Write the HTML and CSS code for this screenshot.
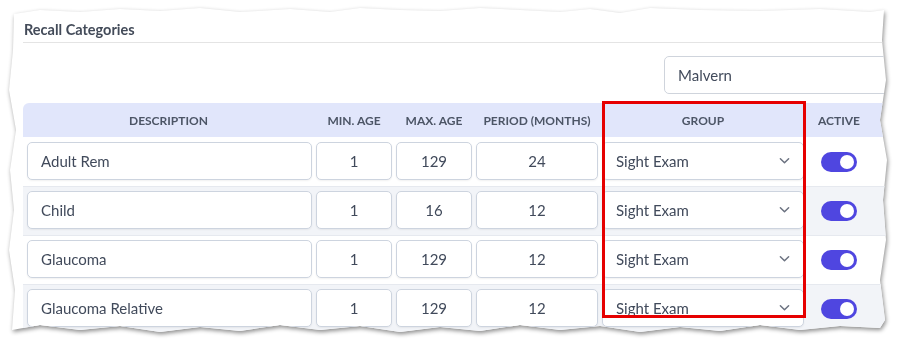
FILE: index.html
```html
<!DOCTYPE html>
<html lang="en">
<head>
    <meta charset="UTF-8">
    <title>Recall Categories</title>
    <link rel="stylesheet" href="styles.css">
</head>
<body>
    <div class="paper">
        <div class="sheet">
            <h2 class="title">Recall Categories</h2>

            <div class="filter-row">
                <div class="branch-input">Malvern</div>
            </div>

            <table class="recall-table">
                <thead>
                    <tr>
                        <th class="col-desc">Description</th>
                        <th class="col-age">Min. Age</th>
                        <th class="col-age">Max. Age</th>
                        <th class="col-period">Period (Months)</th>
                        <th class="col-group">Group</th>
                        <th class="col-active">Active</th>
                        <th class="col-rest"></th>
                    </tr>
                </thead>
                <tbody>
                    <tr>
                        <td><div class="field">Adult Rem</div></td>
                        <td><div class="field num">1</div></td>
                        <td><div class="field num">129</div></td>
                        <td><div class="field num">24</div></td>
                        <td><div class="field select">Sight Exam <svg class="chev" viewBox="0 0 12 8"><path d="M1.5 1.5 6 6l4.5-4.5"/></svg></div></td>
                        <td><span class="toggle"></span></td>
                        <td></td>
                    </tr>
                    <tr>
                        <td><div class="field">Child</div></td>
                        <td><div class="field num">1</div></td>
                        <td><div class="field num">16</div></td>
                        <td><div class="field num">12</div></td>
                        <td><div class="field select">Sight Exam <svg class="chev" viewBox="0 0 12 8"><path d="M1.5 1.5 6 6l4.5-4.5"/></svg></div></td>
                        <td><span class="toggle"></span></td>
                        <td></td>
                    </tr>
                    <tr>
                        <td><div class="field">Glaucoma</div></td>
                        <td><div class="field num">1</div></td>
                        <td><div class="field num">129</div></td>
                        <td><div class="field num">12</div></td>
                        <td><div class="field select">Sight Exam <svg class="chev" viewBox="0 0 12 8"><path d="M1.5 1.5 6 6l4.5-4.5"/></svg></div></td>
                        <td><span class="toggle"></span></td>
                        <td></td>
                    </tr>
                    <tr>
                        <td><div class="field">Glaucoma Relative</div></td>
                        <td><div class="field num">1</div></td>
                        <td><div class="field num">129</div></td>
                        <td><div class="field num">12</div></td>
                        <td><div class="field select">Sight Exam <svg class="chev" viewBox="0 0 12 8"><path d="M1.5 1.5 6 6l4.5-4.5"/></svg></div></td>
                        <td><span class="toggle"></span></td>
                        <td></td>
                    </tr>
                </tbody>
            </table>

            <!-- annotation box drawn over the group column -->
            <div class="highlight"></div>
        </div>
    </div>
</body>
</html>
```

FILE: styles.css
```css
body { margin: 0; background: #fff; font-family: 'Lato', sans-serif; color: #414a5b; }

.paper { width: 898px; height: 343px; filter: drop-shadow(1px 2px 2px rgba(0, 0, 0, 0.45)); }
.sheet {
    position: relative; width: 898px; height: 343px; box-sizing: border-box; padding: 21px 0 0 23px;
    background: #fff; overflow: hidden;
    clip-path: polygon(14px 14px, 40px 10px, 80px 12px, 120px 9px, 160px 11px, 200px 8px, 240px 12px, 290px 9px, 330px 12px, 360px 8px, 400px 10px, 440px 11px, 480px 8px, 520px 10px, 560px 12px, 590px 9px, 620px 13px, 650px 8px, 700px 10px, 760px 11px, 820px 9px, 870px 12px, 884px 10px,
        882px 40px, 886px 80px, 880px 120px, 887px 160px, 883px 200px, 886px 240px, 880px 280px, 885px 320px, 880px 328px,
        840px 326px, 800px 330px, 760px 325px, 720px 331px, 680px 327px, 640px 332px, 600px 326px, 560px 330px, 520px 325px, 480px 331px, 440px 327px, 400px 332px, 360px 326px, 320px 330px, 280px 325px, 240px 331px, 200px 327px, 160px 332px, 120px 326px, 80px 330px, 40px 325px, 12px 330px,
        15px 290px, 9px 250px, 14px 210px, 10px 170px, 16px 130px, 9px 90px, 13px 50px);
}

.title { margin: 0; padding: 0 0 4px 1px; font-size: 14.5px; line-height: 17px; font-weight: 700; color: #434b59; border-bottom: 1px solid #e4e4e4; }

.filter-row { display: flex; padding: 13px 0 9px 641px; }
.branch-input { width: 260px; height: 38px; box-sizing: border-box; padding-left: 13px; display: flex; align-items: center; border: 1px solid #cfd4dc; border-radius: 5px; font-size: 15px; }

.recall-table { border-collapse: collapse; table-layout: fixed; width: 900px; }
.recall-table th { height: 34px; padding: 0; background: #e1e6fb; font-size: 12px; font-weight: 700; text-transform: uppercase; color: #4c5566; text-align: center; }
.recall-table th:first-child { border-top-left-radius: 6px; }
.recall-table td { height: 49px; padding: 0 2px 1px; box-sizing: border-box; text-align: center; border-top: 1px solid #e6e9ef; }
.recall-table tbody tr:first-child td { border-top: none; }
.recall-table tbody tr:nth-child(even) td { background: #f2f4f8; }
.recall-table td:first-child { padding-left: 4px; }

.col-desc { width: 291px; }
.col-age { width: 80px; }
.col-period { width: 126px; }
.col-group { width: 206px; }
.col-active { width: 66px; }

.field { height: 38px; box-sizing: border-box; display: flex; align-items: center; padding: 0 13px; background: #fff; border: 1px solid #cdd4df; border-radius: 5px; box-shadow: 0 1px 2px rgba(0, 0, 0, 0.06); font-size: 15px; color: #414a5b; text-align: left; }
.field.num { justify-content: center; padding: 0; }
.field.select { justify-content: space-between; }
.chev { width: 11px; height: 8px; fill: none; stroke: #6b7280; stroke-width: 1.6; stroke-linecap: round; stroke-linejoin: round; }

.toggle { display: inline-block; position: relative; width: 36px; height: 20px; border-radius: 10px; background: #4f46e0; vertical-align: middle; }
.toggle::after { content: ""; position: absolute; right: 3px; top: 3px; width: 14px; height: 14px; border-radius: 50%; background: #fff; }

.highlight { position: absolute; left: 602px; top: 101px; width: 198px; height: 211px; border: 3px solid #e60000; }
```
